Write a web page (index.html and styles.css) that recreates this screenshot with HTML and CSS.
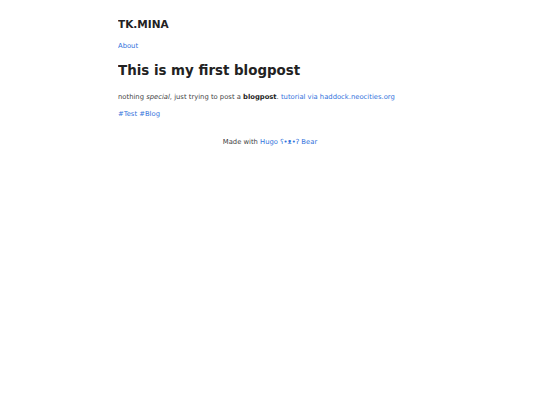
FILE: index.html
```html
<!DOCTYPE html>
<html>
<head>
	<meta charset="utf-8">
	<meta name="viewport" content="width=device-width, initial-scale=1">
	<title>This is my first blogpost | TK.MINA</title>
	<link rel="stylesheet" href="styles.css">
</head>
<body>
	<header>
		<a class="title" href="#"><h2>TK.MINA</h2></a>
		<nav><p><a href="#">About</a></p></nav>
	</header>
	<main>
		<h1>This is my first blogpost</h1>
		<content>
			<p>nothing <em>special</em>, just trying to post a <strong>blogpost</strong>. <a href="#">tutorial via haddock.neocities.org</a></p>
		</content>
		<p class="tags"><a href="#">#Test</a> <a href="#">#Blog</a></p>
	</main>
	<footer>Made with <a href="#">Hugo ʕ•ᴥ•ʔ Bear</a></footer>
</body>
</html>
```

FILE: styles.css
```css
body {
	font-family: "DejaVu Sans", Verdana, sans-serif;
	font-size: 6.8px;
	line-height: 1.55;
	color: #444;
	max-width: 304px;
	margin: 0 auto;
	padding: 11px 0;
}
h1, h2 {
	font-family: "DejaVu Sans", Verdana, sans-serif;
	color: #222;
}
a {
	color: #3273dc;
	text-decoration: none;
}
.title {
	text-decoration: none;
	border: 0;
}
.title h2 {
	font-size: 10.5px;
	line-height: 1.5;
	margin: 6px 0 0;
}
nav p {
	margin: 8px 0;
}
h1 {
	font-size: 13.4px;
	line-height: 1.5;
	margin: 10px 0 10.75px;
}
content p {
	margin: 0 0 6.5px;
}
strong {
	color: #222;
}
.tags {
	margin: 0;
}
footer {
	padding: 17.5px 0 0;
	text-align: center;
}
```
